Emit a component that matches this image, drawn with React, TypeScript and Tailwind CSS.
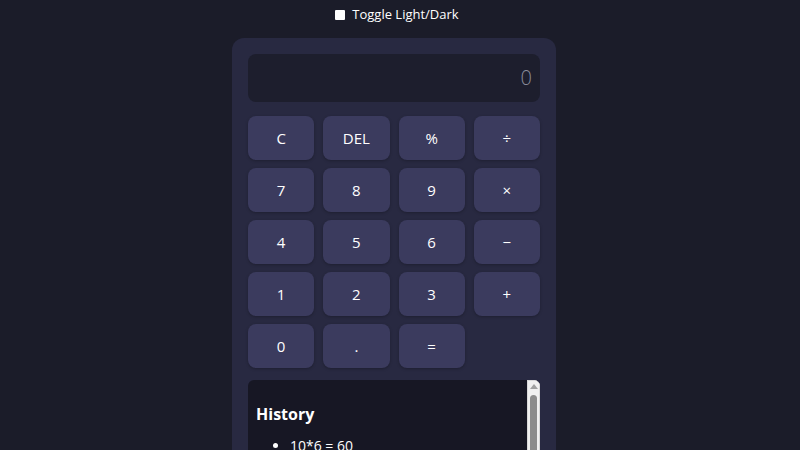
import React from "react";

const keys = ["C", "DEL", "%", "÷", "7", "8", "9", "×", "4", "5", "6", "−", "1", "2", "3", "+", "0", ".", "="];

export default function App() {
  return (
    <div className="h-[450px] w-full overflow-hidden bg-[#1b1c29] text-white" style={{ fontFamily: '"Open Sans", "Noto Sans", sans-serif' }}>
      <div className="flex w-[788px] flex-col items-center">
        <label className="ml-[6px] mt-[6px] flex h-[18px] items-center gap-[7px] text-[13px] text-white">
          <span className="block h-[10px] w-[10px] rounded-[1px] bg-white" />
          <span>Toggle Light/Dark</span>
        </label>
        <div className="mt-[14px] w-[324px] rounded-[12px] bg-[#282941] p-4 pb-0">
          <div className="flex h-[48px] items-center justify-end rounded-[8px] bg-[#1d1e2d] px-[8px] text-[20px] font-light text-[#8a8b99]">0</div>
          <div className="mt-[14px] grid grid-cols-4 gap-x-[9px] gap-y-[8px]">
            {keys.map((k) => (
              <div key={k} className="flex h-[44px] items-center justify-center rounded-[8px] bg-[#3b3b5e] text-[15px] text-white shadow-[0_1px_3px_rgba(0,0,0,0.25)]">
                {k}
              </div>
            ))}
          </div>
          <div className="mt-[12px] flex h-[110px] overflow-hidden rounded-t-[6px] bg-[#171724]">
            <div className="flex-1 pl-[8px] pt-[23px]">
              <div className="text-[16px] font-bold leading-[22px] text-white">History</div>
              <ul className="mt-[12px] list-disc pl-[34px] text-[14px] leading-[18px] text-white">
                <li>10*6 = 60</li>
              </ul>
            </div>
            <div className="flex w-[13px] flex-col items-center border border-[#d8d8d8] bg-[#f0f0f0]">
              <div className="mt-[3px] h-0 w-0 border-x-[4px] border-b-[5px] border-x-transparent border-b-[#a0a0a0]" />
              <div className="mt-[6px] w-[7px] flex-1 rounded-[4px] bg-[#8c8c8c]" />
            </div>
          </div>
        </div>
      </div>
    </div>
  );
}
